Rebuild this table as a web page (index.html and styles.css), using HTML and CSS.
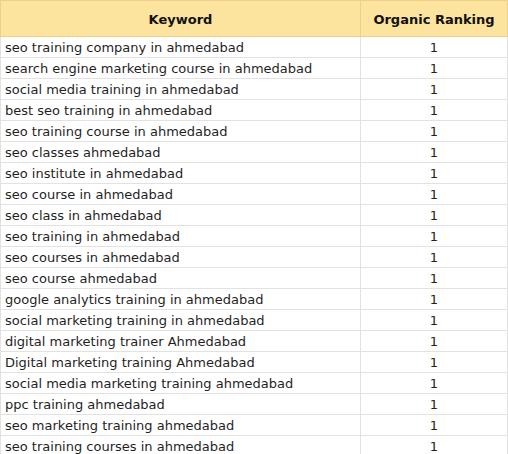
FILE: index.html
```html
<!DOCTYPE html>
<html>
<head>
<meta charset="utf-8">
<link rel="stylesheet" href="styles.css">
</head>
<body>
<table class="rank-table">
  <thead>
    <tr><th class="col-kw">Keyword</th><th class="col-rank">Organic Ranking</th></tr>
  </thead>
  <tbody>
    <tr><td>seo training company in ahmedabad</td><td class="num">1</td></tr>
    <tr><td>search engine marketing course in ahmedabad</td><td class="num">1</td></tr>
    <tr><td>social media training in ahmedabad</td><td class="num">1</td></tr>
    <tr><td>best seo training in ahmedabad</td><td class="num">1</td></tr>
    <tr><td>seo training course in ahmedabad</td><td class="num">1</td></tr>
    <tr><td>seo classes ahmedabad</td><td class="num">1</td></tr>
    <tr><td>seo institute in ahmedabad</td><td class="num">1</td></tr>
    <tr><td>seo course in ahmedabad</td><td class="num">1</td></tr>
    <tr><td>seo class in ahmedabad</td><td class="num">1</td></tr>
    <tr><td>seo training in ahmedabad</td><td class="num">1</td></tr>
    <tr><td>seo courses in ahmedabad</td><td class="num">1</td></tr>
    <tr><td>seo course ahmedabad</td><td class="num">1</td></tr>
    <tr><td>google analytics training in ahmedabad</td><td class="num">1</td></tr>
    <tr><td>social marketing training in ahmedabad</td><td class="num">1</td></tr>
    <tr><td>digital marketing trainer Ahmedabad</td><td class="num">1</td></tr>
    <tr><td>Digital marketing training Ahmedabad</td><td class="num">1</td></tr>
    <tr><td>social media marketing training ahmedabad</td><td class="num">1</td></tr>
    <tr><td>ppc training ahmedabad</td><td class="num">1</td></tr>
    <tr><td>seo marketing training ahmedabad</td><td class="num">1</td></tr>
    <tr><td>seo training courses in ahmedabad</td><td class="num">1</td></tr>
  </tbody>
</table>
</body>
</html>
```
FILE: styles.css
```css
html, body {
  margin: 0;
  padding: 0;
  background: #ffffff;
}
.rank-table {
  border-collapse: collapse;
  width: 508px;
  table-layout: fixed;
  font-family: "DejaVu Sans", Verdana, sans-serif;
  font-size: 13px;
  color: #1f1f1f;
}
.rank-table th {
  background: #fde49e;
  border: 1px solid #ecd08a;
  height: 33px;
  padding: 2px 0 0 0;
  font-weight: bold;
  color: #111;
  text-align: center;
  vertical-align: middle;
}
.rank-table th.col-kw {
  width: 359px;
}
.rank-table td {
  border: 1px solid #e2e2e2;
  height: 18px;
  line-height: 18px;
  padding: 2px 0 0 4px;
  white-space: nowrap;
  overflow: hidden;
}
.rank-table td.num {
  text-align: center;
  padding: 2px 0 0 0;
}
```
